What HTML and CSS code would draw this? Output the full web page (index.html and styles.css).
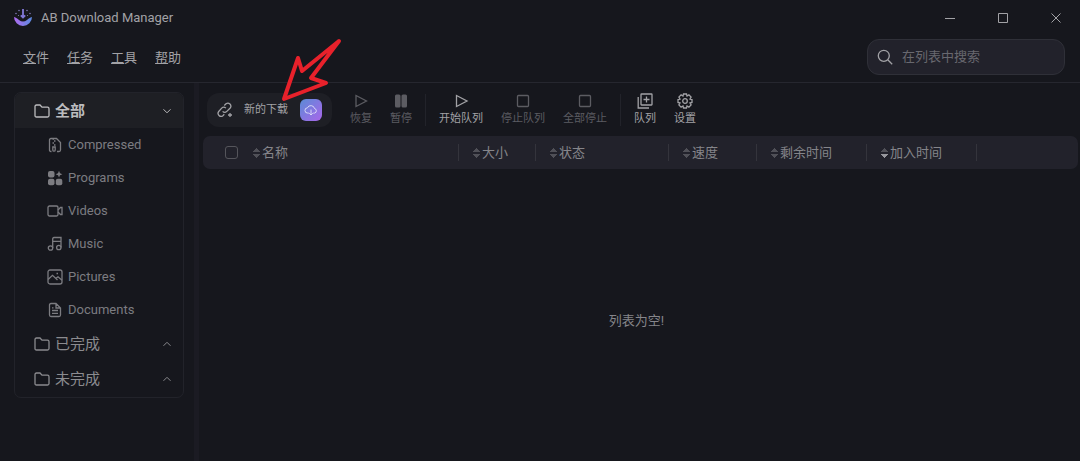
FILE: index.html
```html
<!DOCTYPE html>
<html lang="zh-CN">
<head>
  <meta charset="UTF-8" />
  <meta name="viewport" content="width=device-width, initial-scale=1.0" />
  <title>AB Download Manager</title>
  <link rel="stylesheet" href="styles.css">
</head>
<body>
  <header class="titlebar">
    <svg class="logo" viewBox="0 0 20 20">
      <defs>
        <linearGradient id="brand" x1="0" y1="0" x2="1" y2="0">
          <stop offset="0" stop-color="#b06af0" />
          <stop offset="1" stop-color="#5a8be0" />
        </linearGradient>
      </defs>
      <path d="M1 9C3 9.500 4.500 10.500 6 12Q10 15 14 12C15.500 10.500 17 9.500 19 9A9 9 0 0 1 1 9Z" fill="url(#brand)" />
      <path d="M10 1v8M7.800 7.300l2.200 2.200 2.200-2.200" fill="none" stroke="#8178d8" stroke-width="1.800" />
      <g fill="#7d78b5"><circle cx="6" cy="2.500" r=".8" /><circle cx="14" cy="2.500" r=".8" /><circle cx="3" cy="5.500" r=".8" /><circle cx="17" cy="5.500" r=".8" /><circle cx="5.500" cy="7.500" r=".6" /><circle cx="14.500" cy="7.500" r=".6" /></g>
    </svg>
    <h1>AB Download Manager</h1>
    <div class="window-buttons">
      <button aria-label="最小化"><svg viewBox="0 0 10 10"><path d="M0 5.500h10" /></svg></button>
      <button aria-label="最大化"><svg viewBox="0 0 10 10"><path d="M.5.5h9v9h-9z" /></svg></button>
      <button aria-label="关闭"><svg viewBox="0 0 10 10"><path d="M.5.5l9 9M9.500.5l-9 9" /></svg></button>
    </div>
  </header>

  <div class="menubar">
    <nav class="menu">
      <button><u>文</u>件</button>
      <button><u>任</u>务</button>
      <button><u>工</u>具</button>
      <button><u>帮</u>助</button>
    </nav>
    <label class="search">
      <svg class="icon" viewBox="0 0 16 16"><circle cx="6.800" cy="6.800" r="5.500" /><path d="M11 11l4.200 4.200" /></svg>
      <input type="text" placeholder="在列表中搜索" aria-label="在列表中搜索">
    </label>
  </div>

  <div class="content">
    <aside class="sidebar">
      <div class="categories">
        <button class="group active">
          <svg class="icon" viewBox="0 0 16 16"><path d="M1 12.500v-9Q1 2 2.500 2H6l2 2.200h5.500Q15 4.200 15 5.700v6.800q0 1.500-1.500 1.500h-11Q1 14 1 12.500z" /></svg>
          <span>全部</span>
          <svg class="chevron" viewBox="0 0 8 8"><path d="M.5 2.300L4 5.800l3.500-3.500" /></svg>
        </button>
        <button class="item">
          <svg class="icon" viewBox="0 0 16 16"><path d="M4.500 14.500H4Q2.500 14.500 2.500 13V3Q2.500 1.500 4 1.500h5.500l4 4V13q0 1.500-1.500 1.500h-2" /><path d="M5.500 2h1.500M7 4h1.500M5.500 6h1.500M7 8h1.500M5.800 10h2.400v3a1.200 1.200 0 0 1-2.400 0z" /></svg>
          Compressed
        </button>
        <button class="item">
          <svg class="icon solid" viewBox="0 0 16 16"><rect x="1" y="1" width="6.500" height="6.500" rx="2" /><rect x="1" y="8.800" width="6.500" height="6.500" rx="2" /><rect x="8.800" y="8.800" width="6.500" height="6.500" rx="2" /><path d="M12 .8l1 2.400 2.400 1-2.400 1-1 2.400-1-2.400-2.400-1 2.400-1z" /></svg>
          Programs
        </button>
        <button class="item">
          <svg class="icon" viewBox="0 0 16 16"><rect x="1" y="3" width="10" height="10" rx="1.500" /><path d="M11 7l2.500-2.500H15v7h-1.500L11 9" /></svg>
          Videos
        </button>
        <button class="item">
          <svg class="icon" viewBox="0 0 16 16"><circle cx="3.500" cy="12" r="2.200" /><circle cx="11.800" cy="11.500" r="2.200" /><path d="M5.700 12V3Q5.700 1.500 7 1.500h7v10M5.700 5.300H14" /></svg>
          Music
        </button>
        <button class="item">
          <svg class="icon" viewBox="0 0 16 16"><rect x="1" y="1" width="14" height="14" rx="2" /><path d="M1 10.500l4.500-4.200 5 4.700M9 9.300l2-1.500 4 3.500M9.500 4.500h1.500" /></svg>
          Pictures
        </button>
        <button class="item">
          <svg class="icon" viewBox="0 0 16 16"><path d="M9 1.500H4Q2.500 1.500 2.500 3v10q0 1.500 1.500 1.500h8q1.500 0 1.500-1.500V6zV6h4.500M5 5.800h1.500M5 8.500h6M5 11.300h6" /></svg>
          Documents
        </button>
        <button class="group">
          <svg class="icon" viewBox="0 0 16 16"><path d="M1 12.500v-9Q1 2 2.500 2H6l2 2.200h5.500Q15 4.200 15 5.700v6.800q0 1.500-1.500 1.500h-11Q1 14 1 12.500z" /></svg>
          <span>已完成</span>
          <svg class="chevron" viewBox="0 0 8 8"><path d="M.5 5.800L4 2.300l3.500 3.500" /></svg>
        </button>
        <button class="group">
          <svg class="icon" viewBox="0 0 16 16"><path d="M1 12.500v-9Q1 2 2.500 2H6l2 2.200h5.500Q15 4.200 15 5.700v6.800q0 1.500-1.500 1.500h-11Q1 14 1 12.500z" /></svg>
          <span>未完成</span>
          <svg class="chevron" viewBox="0 0 8 8"><path d="M.5 5.800L4 2.300l3.500 3.500" /></svg>
        </button>
      </div>
    </aside>

    <main>
      <div class="toolbar">
        <div class="new-download">
          <button class="new-link">
            <svg class="icon" viewBox="0 0 16 16"><path d="M5.600 9.400a3 3 0 0 0 4.200 0l3.400-3.400a3 3 0 0 0-4.200-4.200L7.300 3.500M8.900 6.100a3 3 0 0 0-4.200 0l-3 3.400a3 3 0 0 0 4.200 4.200l1.400-1.400" /><path d="M13 11v4M11 13h4" /></svg>
            新的下载
          </button>
          <button class="cloud" aria-label="下载">
            <svg viewBox="0 0 16 16"><path d="M5.500 11.500H4.300a3 3 0 0 1-.4-6A4.300 4.300 0 0 1 12 6.300a2.700 2.700 0 0 1 .2 5.200h-1.700M8 7.500v6M6 11.700l2 2 2-2" /></svg>
          </button>
        </div>
        <button class="tool" disabled>
          <svg class="icon" viewBox="0 0 16 16"><path d="M3 2.500v11L13.500 8z" /></svg>
          恢复
        </button>
        <button class="tool" disabled>
          <svg class="icon solid" viewBox="0 0 16 16"><rect x="2" y="1.500" width="5.500" height="13" rx="1.500" /><rect x="8.500" y="1.500" width="5.500" height="13" rx="1.500" /></svg>
          暂停
        </button>
        <span class="divider"></span>
        <button class="tool">
          <svg class="icon" viewBox="0 0 16 16"><path d="M3.500 2.500v11L14 8z" /></svg>
          开始队列
        </button>
        <button class="tool" disabled>
          <svg class="icon" viewBox="0 0 16 16"><rect x="2.500" y="2.500" width="11" height="11" rx="1" /></svg>
          停止队列
        </button>
        <button class="tool" disabled>
          <svg class="icon" viewBox="0 0 16 16"><rect x="2.500" y="2.500" width="11" height="11" rx="1" /></svg>
          全部停止
        </button>
        <span class="divider"></span>
        <button class="tool">
          <svg class="icon" viewBox="0 0 16 16"><rect x="4" y="1" width="11" height="11" rx=".5" /><path d="M1.200 4v11H12M9.500 3.500v6M6.500 6.500h6" /></svg>
          队列
        </button>
        <button class="tool">
          <svg class="icon" viewBox="0 0 16 16"><path d="M6.500 1h3l.5 2 1.900-1.100 2.200 2.200L13 6l2 .5v3l-2 .5 1.100 1.900-2.200 2.200L10 13l-.5 2h-3L6 13l-1.900 1.100-2.200-2.200L3 10l-2-.5v-3L3 6 1.900 4.100l2.200-2.200L6 3z" /><circle cx="8" cy="8" r="2.300" /></svg>
          设置
        </button>
      </div>

      <table class="downloads">
        <colgroup>
          <col class="col-check"><col class="col-name"><col class="col-size"><col class="col-status">
          <col class="col-speed"><col class="col-time"><col class="col-time"><col>
        </colgroup>
        <thead>
          <tr>
            <th><input type="checkbox" aria-label="全选"></th>
            <th><button class="sort">名称</button></th>
            <th><button class="sort">大小</button></th>
            <th><button class="sort">状态</button></th>
            <th><button class="sort">速度</button></th>
            <th><button class="sort">剩余时间</button></th>
            <th><button class="sort desc">加入时间</button></th>
            <th></th>
          </tr>
        </thead>
      </table>
      <p class="empty">列表为空!</p>
    </main>
  </div>

  <!-- Flecha que señala el botón de nueva descarga -->
  <svg class="pointer" viewBox="0 0 64 66"><path d="M59 5L22 35l-4-13L4 63l42-16-15-5z" /></svg>
</body>
</html>
```
FILE: styles.css
```css
* {
  box-sizing: border-box;
}
body {
  font-family: Roboto, 'Noto Sans CJK SC', sans-serif;
  font-size: 13px;
  line-height: 20px;
  margin: 0;
  min-height: 100vh;
  display: flex;
  flex-direction: column;
  background: #16171d;
  color: #a2a2a6;
}
button {
  font: inherit;
  color: inherit;
  background: none;
  border: 0;
  padding: 0;
}
svg {
  flex: none;
  fill: none;
  stroke: currentColor;
}
.icon {
  width: 16px;
  height: 16px;
  stroke-width: 1.3;
}
.solid {
  fill: currentColor;
  stroke: none;
}

/* barra de título */
.titlebar {
  display: flex;
  align-items: center;
  height: 36px;
  padding: 0 19px 0 13px;
}
.logo {
  width: 20px;
  height: 20px;
  stroke: none;
}
h1 {
  margin: 0 0 0 8px;
  font-size: 13px;
  font-weight: 400;
}
.window-buttons {
  display: flex;
  gap: 43px;
  margin-left: auto;
}
.window-buttons button {
  display: flex;
}
.window-buttons svg {
  width: 10px;
  height: 10px;
}

/* menú y búsqueda */
.menubar {
  display: flex;
  justify-content: space-between;
  height: 47px;
  padding: 3px 15px 0 23px;
  border-bottom: 1px solid #26272f;
}
.menu {
  display: flex;
  gap: 18px;
  padding-bottom: 6px;
}
.menu u {
  text-underline-offset: 1px;
}
.search {
  display: flex;
  align-items: center;
  gap: 9px;
  width: 198px;
  height: 36px;
  padding: 0 9px;
  background: #22222b;
  border: 1px solid #2f3038;
  border-radius: 12px;
}
.search input {
  width: 100%;
  padding: 0;
  font: inherit;
  color: inherit;
  background: none;
  border: 0;
  outline: 0;
}
.search input::placeholder {
  color: #68686f;
}

.content {
  flex: 1;
  display: flex;
}

/* categorías */
.sidebar {
  width: 199px;
  padding: 9px 10px 0 14px;
  border-right: 5px solid #1b1b23;
}
.categories {
  padding-bottom: 1px;
  border: 1px solid #22232a;
  border-radius: 7px;
  overflow: hidden;
}
.group,
.item {
  display: flex;
  align-items: center;
  width: 100%;
  text-align: left;
}
.group {
  height: 35px;
  gap: 5px;
  padding: 0 12px 0 19px;
  font-size: 15px;
  color: #8b8b8f;
}
.group.active {
  background: #1e1f24;
  font-weight: 700;
  color: #bcbcbe;
}
.item {
  height: 33px;
  gap: 5px;
  padding-left: 32px;
  color: #7c7c81;
}
.chevron {
  width: 8px;
  height: 8px;
  margin-left: auto;
}

main {
  flex: 1;
  display: flex;
  flex-direction: column;
  min-width: 0;
  padding: 0 2px 0 4px;
}

/* barra de herramientas */
.toolbar {
  display: flex;
  align-items: center;
  gap: 18px;
  height: 53px;
  padding-left: 4px;
}
.new-download {
  display: flex;
  align-items: center;
  justify-content: space-between;
  width: 125px;
  height: 34px;
  padding: 0 10px;
  background: #1e1f25;
  border-radius: 12px;
}
.new-link {
  display: flex;
  align-items: center;
  gap: 11px;
  font-size: 11px;
}
.cloud {
  display: flex;
  padding: 4px;
  color: #e4e4fa;
  background: linear-gradient(135deg, #5b8bd6, #a966ea);
  border-radius: 6px;
}
.cloud svg {
  width: 14px;
  height: 14px;
}
.tool {
  display: flex;
  flex-direction: column;
  align-items: center;
  gap: 2px;
  font-size: 11px;
  line-height: 16px;
}
.tool:disabled {
  color: #5c5c62;
}
.divider {
  width: 1px;
  height: 32px;
  margin: 0 -5px;
  background: #22232a;
}

/* tabla de descargas */
.downloads {
  width: 100%;
  table-layout: fixed;
  border-spacing: 0;
  background: #22222b;
  border-radius: 7px;
}
.col-check {
  width: 36px;
}
.col-name {
  width: 220px;
}
.col-size {
  width: 77px;
}
.col-status {
  width: 133px;
}
.col-speed {
  width: 88px;
}
.col-time {
  width: 110px;
}
th {
  height: 33px;
  padding: 0;
  font-weight: 400;
  color: #85858a;
}
th input {
  display: block;
  appearance: none;
  width: 13px;
  height: 13px;
  margin: 0 0 0 22px;
  border: 1px solid #55555b;
  border-radius: 3px;
}
.sort {
  display: flex;
  align-items: center;
  gap: 2px;
  width: 100%;
  height: 17px;
  padding-left: 14px;
  border-right: 1px solid #34343c;
}
.sort::before {
  content: '';
  width: 7px;
  height: 10px;
  background:
    conic-gradient(from 135deg at 50% 0, #505057 90deg, transparent 0) 0 0 / 7px 4px no-repeat,
    conic-gradient(from -45deg at 50% 100%, #505057 90deg, transparent 0) 0 100% / 7px 4px no-repeat;
}
.sort.desc::before {
  background:
    conic-gradient(from 135deg at 50% 0, #505057 90deg, transparent 0) 0 0 / 7px 4px no-repeat,
    conic-gradient(from -45deg at 50% 100%, #96969c 90deg, transparent 0) 0 100% / 7px 4px no-repeat;
}
.empty {
  margin: auto;
  padding: 12px 8px 0 0;
  color: #85858a;
}

.pointer {
  position: absolute;
  left: 280px;
  top: 36px;
  width: 64px;
  height: 66px;
  stroke: #e8212b;
  stroke-width: 4;
  stroke-linejoin: round;
  pointer-events: none;
}
```
